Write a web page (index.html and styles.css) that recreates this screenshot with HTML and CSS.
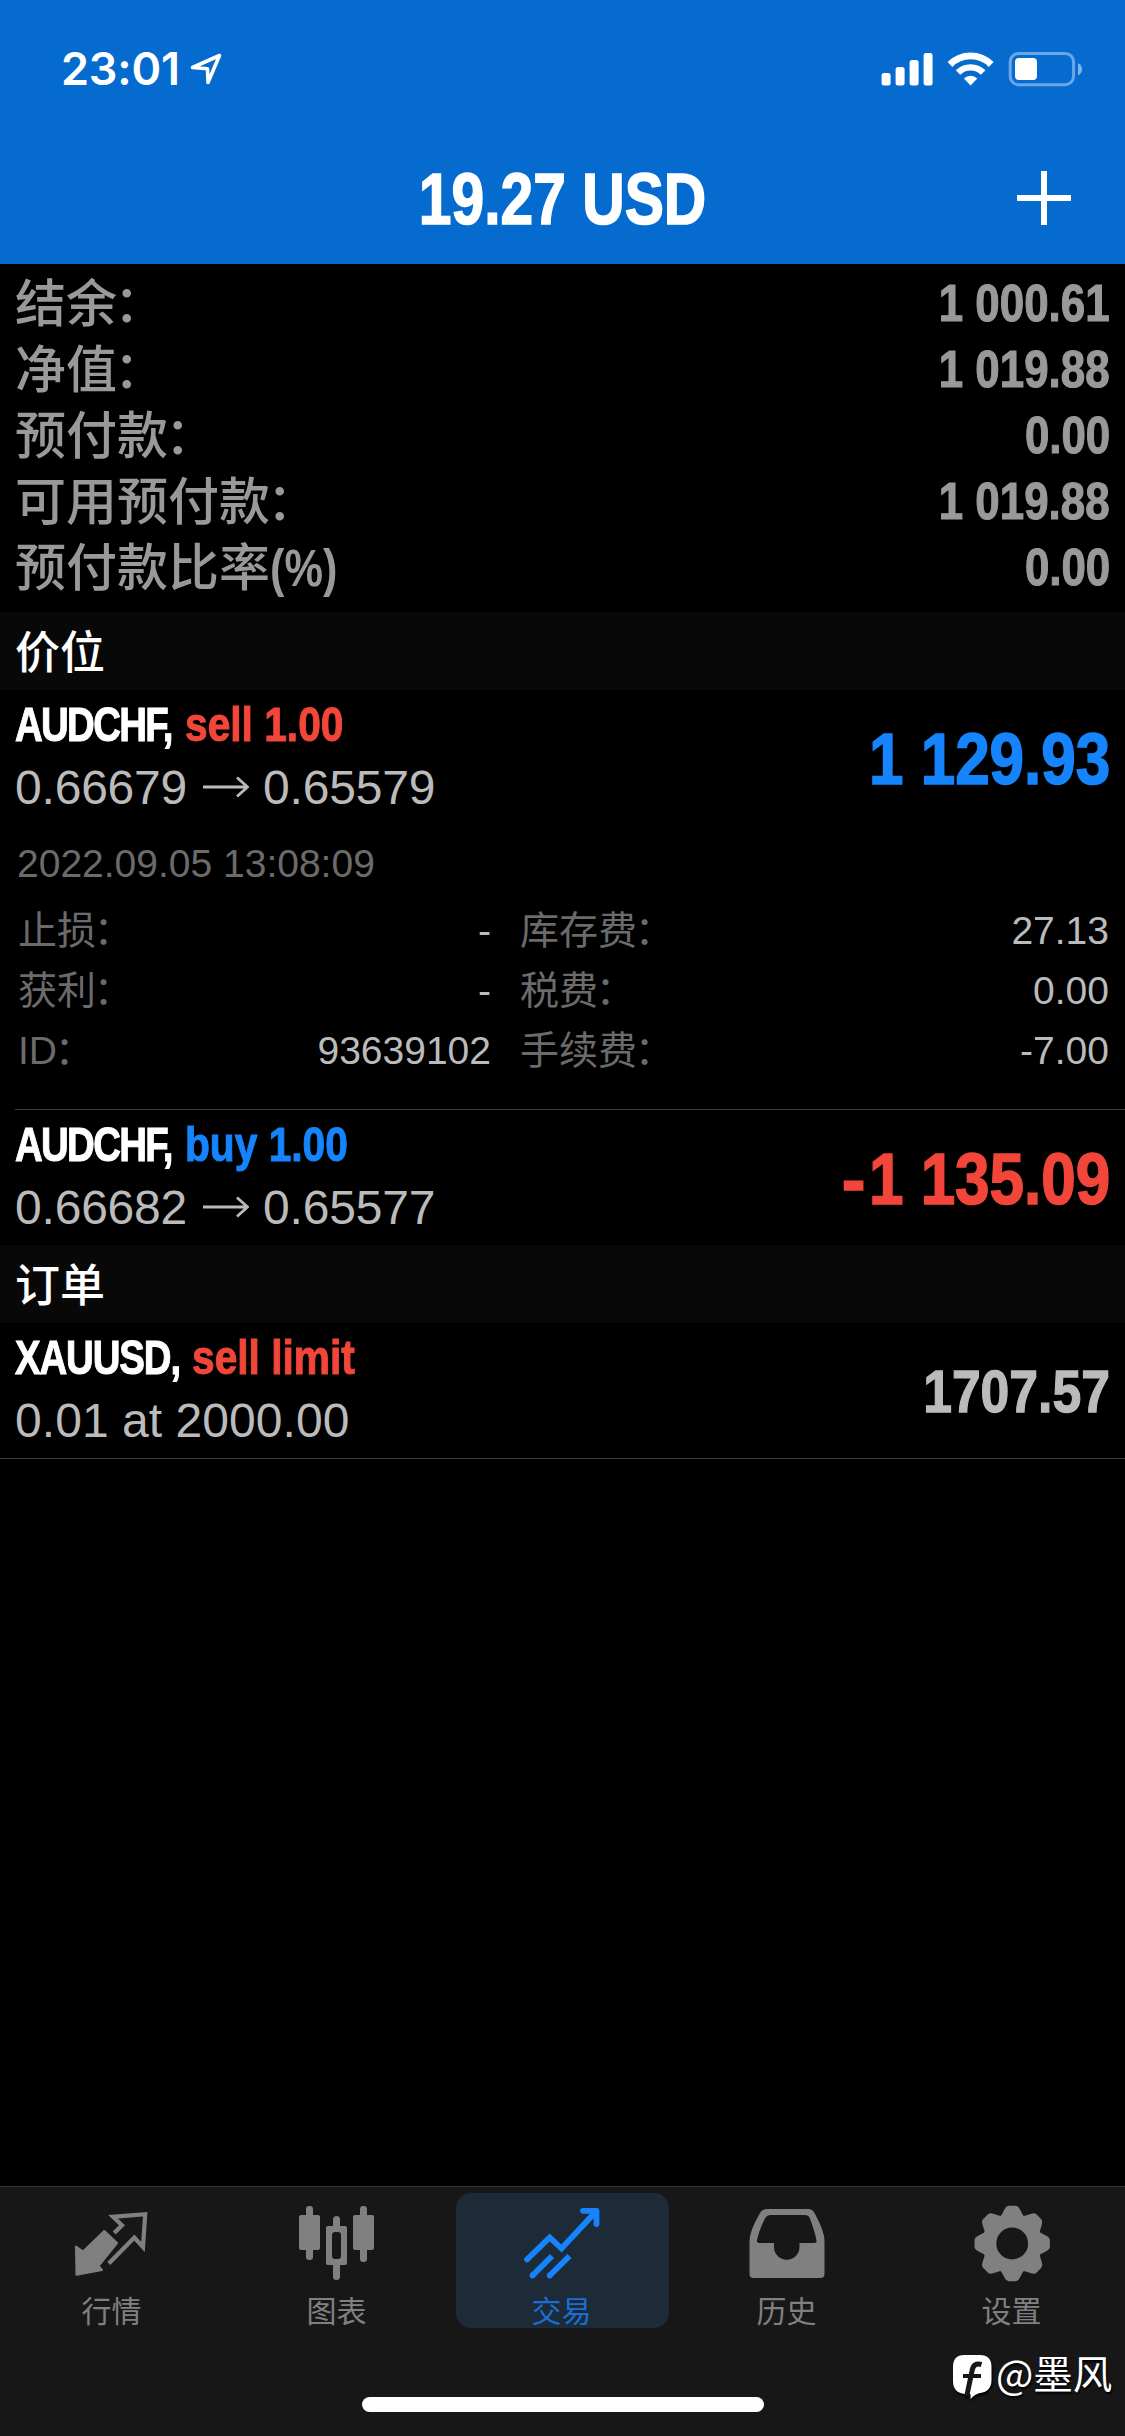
FILE: index.html
```html
<!DOCTYPE html>
<html lang="zh-CN">
<head>
<meta charset="utf-8">
<title>19.27 USD</title>
<link rel="stylesheet" href="styles.css">
</head>
<body>
<div class="screen">
  <header class="header">
    <div class="status">
      <span class="clock">23:01</span>
      <svg class="locate" width="34" height="34" viewBox="0 0 34 34"><path d="M30.500 4.500 3.500 16.500 18.500 17.800 19 31.500Z" fill="none" stroke="#fff" stroke-width="3.600" stroke-linejoin="round"/></svg>
      <svg class="indicators" width="204" height="38" viewBox="0 0 204 38">
        <g fill="#fff">
          <rect x="2.600" y="23" width="9" height="12.500" rx="2.500"/>
          <rect x="16.600" y="17" width="9" height="18.500" rx="2.500"/>
          <rect x="30.600" y="10" width="9" height="25.500" rx="2.500"/>
          <rect x="44.600" y="3" width="9" height="32.500" rx="2.500"/>
          <path d="M91.600 35.500 84.900 28.500A9.700 9.700 0 0 1 98.300 28.500Z"/>
        </g>
        <path d="M79 22.500A18 18 0 0 1 104.200 22.500" fill="none" stroke="#fff" stroke-width="6.400"/>
        <path d="M71 14.500A29 29 0 0 1 112.200 14.500" fill="none" stroke="#fff" stroke-width="6.800"/>
        <rect x="131.200" y="3.400" width="63.400" height="31.400" rx="8.500" fill="none" stroke="#6aa7e6" stroke-width="3"/>
        <rect x="136" y="8" width="22" height="22" rx="4" fill="#fff"/>
        <path d="M199 13.200Q203 15 203 19.200T199 25.500Z" fill="#7fb3ea"/>
      </svg>
    </div>
    <div class="titlebar">
      <h1 class="total">19.27 USD</h1>
      <svg class="plus" width="54" height="54" viewBox="0 0 54 54"><path d="M27 0V54M0 27H54" stroke="#fff" stroke-width="6"/></svg>
    </div>
  </header>

  <main class="content">
    <dl class="summary">
      <div class="sum-row"><dt>结余<span class="colon">：</span></dt><dd>1 000.61</dd></div>
      <div class="sum-row"><dt>净值<span class="colon">：</span></dt><dd>1 019.88</dd></div>
      <div class="sum-row"><dt>预付款<span class="colon">：</span></dt><dd>0.00</dd></div>
      <div class="sum-row"><dt>可用预付款<span class="colon">：</span></dt><dd>1 019.88</dd></div>
      <div class="sum-row"><dt>预付款比率<span class="pct">(%)</span></dt><dd>0.00</dd></div>
    </dl>

    <h2 class="section">价位</h2>
    <article class="trade trade-open">
      <div class="trade-main">
        <div class="deal">
          <p class="name"><span class="symbol">AUDCHF,</span><span class="side red">sell 1.00</span></p>
          <p class="prices">0.66679<svg class="arrow" width="46" height="22" viewBox="0 0 46 22"><path d="M0 11H44M34 1.500 44.500 11 34 20.500" fill="none" stroke="#bbb" stroke-width="2.800"/></svg>0.65579</p>
        </div>
        <strong class="amount blue">1 129.93</strong>
      </div>
      <p class="date">2022.09.05 13:08:09</p>
      <dl class="details">
        <div class="detail"><dt>止损<span class="colon">：</span></dt><dd>-</dd></div>
        <div class="detail"><dt>库存费<span class="colon">：</span></dt><dd>27.13</dd></div>
        <div class="detail"><dt>获利<span class="colon">：</span></dt><dd>-</dd></div>
        <div class="detail"><dt>税费<span class="colon">：</span></dt><dd>0.00</dd></div>
        <div class="detail"><dt>ID<span class="colon">：</span></dt><dd>93639102</dd></div>
        <div class="detail"><dt>手续费<span class="colon">：</span></dt><dd>-7.00</dd></div>
      </dl>
    </article>
    <article class="trade trade-second">
      <div class="trade-main">
        <div class="deal">
          <p class="name"><span class="symbol">AUDCHF,</span><span class="side blue">buy 1.00</span></p>
          <p class="prices">0.66682<svg class="arrow" width="46" height="22" viewBox="0 0 46 22"><path d="M0 11H44M34 1.500 44.500 11 34 20.500" fill="none" stroke="#bbb" stroke-width="2.800"/></svg>0.65577</p>
        </div>
        <strong class="amount red"><span class="minus">-</span>1 135.09</strong>
      </div>
    </article>

    <h2 class="section">订单</h2>
    <article class="trade trade-order">
      <div class="trade-main">
        <div class="deal">
          <p class="name"><span class="symbol symbol-gold">XAUUSD,</span><span class="side red">sell limit</span></p>
          <p class="prices volume">0.01 at 2000.00</p>
        </div>
        <strong class="amount quote">1707.57</strong>
      </div>
    </article>
  </main>

  <footer class="footer">
    <nav class="tabs">
      <a class="tab">
        <svg class="icon" width="80" height="80" viewBox="0 0 80 80"><path d="M4 43.500 11 48.500 32.300 28 45 40 26.500 63 30 67 4.500 71.800Z" fill="#808080" stroke="#808080" stroke-width="2" stroke-linejoin="round"/><path d="M42.200 30 50 22.200 41 13.800 73.200 11.200 71 44 62.300 34.500 36.800 60.500" fill="none" stroke="#808080" stroke-width="4.200"/></svg>
        <span>行情</span>
      </a>
      <a class="tab">
        <svg class="icon" width="80" height="80" viewBox="0 0 80 80"><g fill="#808080"><rect x="2" y="12" width="21" height="35" rx="2"/><rect x="9" y="3" width="7" height="54" rx="3"/><rect x="56" y="12" width="21" height="35" rx="2"/><rect x="63" y="3" width="7" height="56" rx="3"/><path d="M36 23V16.500A3.500 3.500 0 0 1 43 16.500V23H48Q50 23 50 25V60Q50 62 48 62H43V73.500A3.500 3.500 0 0 1 36 73.500V62H31Q29 62 29 60V25Q29 23 31 23ZM38 29Q35 29 35 32V53Q35 56 38 56H41Q44 56 44 53V32Q44 29 41 29Z" fill-rule="evenodd"/></g></svg>
        <span>图表</span>
      </a>
      <a class="tab active">
        <svg class="icon" width="80" height="80" viewBox="0 0 80 80"><g fill="none" stroke="#1684fc" stroke-width="5.800" stroke-linecap="round"><path d="M5 56.500 27.700 34.500 39.500 45.500 74 8.500"/><path d="M61 7.800H74.500V21" stroke-linejoin="round"/></g><path d="M10.500 72.500 30 53M27.700 72.500 47.500 53" stroke="#1684fc" stroke-width="5.800"/><circle cx="10.500" cy="72.500" r="2.900" fill="#1684fc"/><circle cx="27.700" cy="72.500" r="2.900" fill="#1684fc"/></svg>
        <span>交易</span>
      </a>
      <a class="tab">
        <svg class="icon" width="80" height="80" viewBox="0 0 80 80"><path d="M20 6H61Q65.500 6 67.500 10Q77.500 28 77.500 38V71Q77.500 75 73.500 75H6.500Q2.500 75 2.500 71V38Q2.500 28 13 10Q15 6 20 6ZM23 12Q20 12 18.500 14.500Q12 27 10 37.500Q9.500 40 12 40H27V44A12.700 12.700 0 0 0 52.500 44V40H67.500Q70 40 69.500 37.500Q67.500 27 62.500 14.500Q61.500 12 58.500 12Z" fill="#808080" fill-rule="evenodd"/></svg>
        <span>历史</span>
      </a>
      <a class="tab">
        <svg class="icon" width="80" height="80" viewBox="0 0 80 80"><g transform="translate(40.200 40.500)" fill="#808080"><circle r="22.900" fill="none" stroke="#808080" stroke-width="14"/><g id="teeth"><path d="M-11.500-27-7.500-34.500Q-6-37.700-3.500-37.700H3.500Q6-37.700 7.500-34.500L11.500-27Z"/><path d="M-11.500-27-7.500-34.500Q-6-37.700-3.500-37.700H3.500Q6-37.700 7.500-34.500L11.500-27Z" transform="rotate(45)"/><path d="M-11.500-27-7.500-34.500Q-6-37.700-3.500-37.700H3.500Q6-37.700 7.500-34.500L11.500-27Z" transform="rotate(90)"/><path d="M-11.500-27-7.500-34.500Q-6-37.700-3.500-37.700H3.500Q6-37.700 7.500-34.500L11.500-27Z" transform="rotate(135)"/></g><use href="#teeth" transform="rotate(180)"/></g></svg>
        <span>设置</span>
      </a>
    </nav>
    <div class="home-bar"></div>
    <div class="watermark">
      <svg class="badge" width="42" height="48" viewBox="0 0 42 48"><path d="M13 2H29Q40.500 2 40.500 14V27Q40.500 38.500 29 40Q24 41 19.500 46V41H14Q2 40 2 28V14Q2 2 13 2Z" fill="#fff"/><path d="M30.500 11.500Q22.500 9 21 18L15.800 43" fill="none" stroke="#171717" stroke-width="5"/><path d="M12 23H30" stroke="#171717" stroke-width="4"/></svg>
      <span>@墨风</span>
    </div>
  </footer>
</div>
</body>
</html>
```
FILE: styles.css
```css
* { box-sizing: border-box; }
body, h1, h2, p, dl, dd { margin: 0; }
body {
  background: #000;
  font-family: "Liberation Sans", "Noto Sans CJK SC", sans-serif;
  color: #bbb;
}
.screen {
  width: 1125px;
  height: 2436px;
  display: flex;
  flex-direction: column;
  overflow: hidden;
}

/* Header */
.header { height: 264px; background: #066bcf; color: #fff; flex: none; }
.status {
  height: 132px;
  padding: 50px 42px 0 61px;
  display: flex;
  align-items: flex-start;
}
.clock {
  font: 600 45px/38px Inter, sans-serif;
  width: 119px;
  letter-spacing: -0.2px;
}
.locate { margin: 1px 0 0 9px; }
.indicators { margin-left: auto; }
.titlebar {
  height: 132px;
  padding: 0 54px;
  display: grid;
  grid-template-columns: 54px 1fr 54px;
  align-items: center;
}
.plus { margin-top: -2px; }

/* Condensed bold: regular-width bold, narrowed horizontally */
.total, .amount, .symbol, .side, .sum-row dd, .pct {
  display: inline-block;
  white-space: nowrap;
  font-family: "Liberation Sans", sans-serif;
  font-weight: bold;
  -webkit-text-stroke: 0.022em currentColor;
}
.total {
  grid-column: 2;
  justify-self: center;
  font-size: 73px;
  line-height: 134px;
  transform: scaleX(0.805);
}

/* Account summary */
.content { flex: 1; }
.summary {
  height: 348px;
  padding: 6px 15px 0;
}
.sum-row {
  height: 66px;
  display: flex;
  justify-content: space-between;
  align-items: flex-start;
  font: 500 51px/61px "Noto Sans CJK SC", sans-serif;
  color: #999;
}
.sum-row dd {
  line-height: 67px;
  transform: scaleX(0.86);
  transform-origin: right;
}
.sum-row .pct {
  line-height: 50px;
  transform: scaleX(0.85);
  transform-origin: left;
  -webkit-text-stroke: 0;
}
.colon { margin-left: -0.06em; }
.section {
  height: 78px;
  padding-left: 15px;
  background: #080808;
  color: #fff;
  font: 500 45px/76px "Noto Sans CJK SC", sans-serif;
}

/* Positions and orders */
.trade-main {
  display: flex;
  justify-content: space-between;
  padding: 3px 15px 0;
}
.trade-open { height: 419px; }
.trade-second { height: 136px; margin-left: 15px; border-top: 1px solid #3a3a3a; }
.trade-second .trade-main { padding-left: 0; }
.trade-order { height: 136px; border-bottom: 1px solid #3a3a3a; }
.name { display: flex; font-size: 48px; line-height: 63px; }
.symbol {
  width: 170px;
  color: #fff;
  letter-spacing: -2.1px;
  transform: scaleX(0.8);
  transform-origin: 0 50%;
}
.symbol-gold { width: 177px; letter-spacing: -1.4px; }
.side { transform: scaleX(0.848); transform-origin: left; }
.prices { font-size: 48px; line-height: 63px; white-space: nowrap; letter-spacing: -0.2px; }
.volume { letter-spacing: 0.05px; }
.arrow { margin: 0 14px 0 16px; vertical-align: 6px; }
.amount {
  font-size: 72px;
  line-height: 132px;
  transform: scaleX(0.861);
  transform-origin: right;
}
.minus { display: inline-block; transform: scaleX(1.15); transform-origin: right; margin-right: 4px; }
.blue { color: #1684fc; }
.red { color: #f2463a; }
.quote { font-size: 60px; color: #bbb; }
.date { padding: 14px 0 0 17px; font-size: 39px; line-height: 50px; color: #6b6b6b; }
.details {
  display: grid;
  grid-template-columns: 473px 589px;
  column-gap: 29px;
  padding: 12px 15px 0 18px;
}
.detail {
  height: 60px;
  display: flex;
  justify-content: space-between;
  align-items: baseline;
  font: 39px/60px "Liberation Sans", sans-serif;
}
.detail dt {
  font-family: "Liberation Sans", "Noto Sans CJK SC", sans-serif;
  color: #6b6b6b;
}

/* Tab bar */
.footer {
  position: relative;
  height: 250px;
  background: #171717;
  border-top: 1px solid #333;
  flex: none;
}
.tabs { display: grid; grid-template-columns: repeat(5, 225px); padding-top: 6px; }
.tab {
  width: 213px;
  height: 135px;
  margin-left: 6px;
  padding: 10px 2px 0 0;
  border-radius: 15px;
  display: flex;
  flex-direction: column;
  align-items: center;
  color: #808080;
  font: 30px/53px "Noto Sans CJK SC", sans-serif;
}
.active { background: #1d2a38; color: #1b6fd2; }
.icon { display: block; flex: none; }
.home-bar {
  width: 402px;
  height: 15px;
  margin: 69px auto 0;
  border-radius: 8px;
  background: #fff;
}
.watermark {
  position: absolute;
  left: 951px;
  top: 166px;
  display: flex;
  align-items: flex-start;
  color: #fff;
  font: 39.5px/37px "Noto Sans CJK SC", sans-serif;
  white-space: nowrap;
  text-shadow: 1px 2px 2px #000;
}
.badge { filter: drop-shadow(1px 2px 1px #000); }
.watermark span { margin-left: 3px; }
```
